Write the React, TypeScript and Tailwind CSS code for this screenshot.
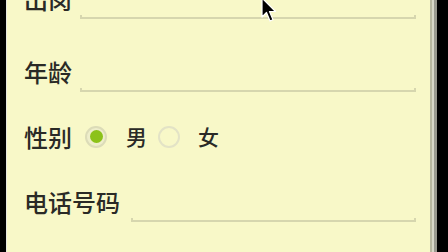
function Field({ className = "" }: { className?: string }) {
  return (
    <div className={"flex-1 self-stretch flex flex-col justify-end pb-[16px] " + className}>
      <div className="h-[4px] border-b-2 border-l-2 border-r-2 border-[#d6d6ae]" />
    </div>
  );
}

function Radio({ checked }: { checked?: boolean }) {
  return (
    <div
      className={
        "w-[22px] h-[22px] rounded-full flex items-center justify-center " +
        (checked ? "bg-[#eeeecb] border-2 border-[#dcdcb8]" : "border-2 border-[#e3e3c6]")
      }
    >
      {checked && <div className="w-[13px] h-[13px] rounded-full bg-[#8cc21a]" />}
    </div>
  );
}

export default function App() {
  return (
    <div className="w-[448px] h-[252px] bg-black flex overflow-hidden relative" style={{ fontFamily: '"Noto Sans CJK SC", "Noto Sans", sans-serif' }}>
      <div className="w-[6px] shrink-0" />
      <div className="w-[1px] bg-[#e8e8e0] shrink-0" />
      <div className="w-[423px] shrink-0 bg-[#f8f8c8] text-[#2a2a26] text-[24px] font-medium leading-none pl-[17px] pr-[14px]">
        <div className="h-[73px] mt-[-38px] flex items-center">
          <span className="w-[56px] shrink-0">出岗</span>
          <Field />
        </div>
        <div className="h-[73px] flex items-center">
          <span className="w-[56px] shrink-0">年龄</span>
          <Field />
        </div>
        <div className="h-[57px] flex items-center">
          <span className="w-[61px] shrink-0">性别</span>
          <Radio checked />
          <span className="ml-[19px] w-[32px] text-[21px]">男</span>
          <Radio />
          <span className="ml-[18px] text-[21px]">女</span>
        </div>
        <div className="h-[73px] flex items-center">
          <span className="w-[107px] shrink-0">电话号码</span>
          <Field />
        </div>
      </div>
      <div className="w-[2px] bg-[#b8b8a0] shrink-0" />
      <div className="w-[2px] bg-[#d8d8c8] shrink-0" />
      <div className="w-[3px] bg-[#9a9a90] shrink-0" />
      <svg className="absolute left-[260px] top-[-3px]" width="18" height="30" viewBox="0 0 18 30">
        <path d="M2 1 L2 20 L6.5 15.5 L10 24 L13 22.7 L9.5 14.5 L15.5 14.5 Z" fill="#000" stroke="#fff" strokeWidth="1.2" strokeLinejoin="round" />
      </svg>
    </div>
  );
}
